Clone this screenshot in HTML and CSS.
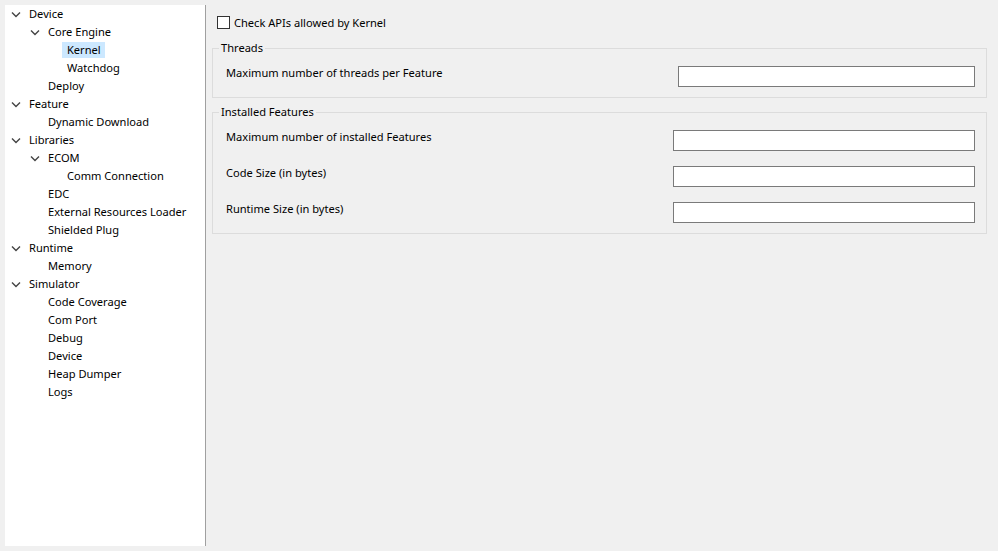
FILE: index.html
```html
<!DOCTYPE html>
<html>
<head>
<meta charset="utf-8">
<link rel="stylesheet" href="styles.css">
</head>
<body>
<div class="window">
  <div class="tree">
    <div class="row l0"><span class="tog open"><svg viewBox="0 0 16 18" width="16" height="18"><path d="M4 7.5 L8 11.5 L12 7.5" /></svg></span><span class="lbl">Device</span></div>
    <div class="row l1"><span class="tog open"><svg viewBox="0 0 16 18" width="16" height="18"><path d="M4 7.5 L8 11.5 L12 7.5" /></svg></span><span class="lbl">Core Engine</span></div>
    <div class="row l2"><span class="tog"></span><span class="lbl sel">Kernel</span></div>
    <div class="row l2"><span class="tog"></span><span class="lbl">Watchdog</span></div>
    <div class="row l1"><span class="tog"></span><span class="lbl">Deploy</span></div>
    <div class="row l0"><span class="tog open"><svg viewBox="0 0 16 18" width="16" height="18"><path d="M4 7.5 L8 11.5 L12 7.5" /></svg></span><span class="lbl">Feature</span></div>
    <div class="row l1"><span class="tog"></span><span class="lbl">Dynamic Download</span></div>
    <div class="row l0"><span class="tog open"><svg viewBox="0 0 16 18" width="16" height="18"><path d="M4 7.5 L8 11.5 L12 7.5" /></svg></span><span class="lbl">Libraries</span></div>
    <div class="row l1"><span class="tog open"><svg viewBox="0 0 16 18" width="16" height="18"><path d="M4 7.5 L8 11.5 L12 7.5" /></svg></span><span class="lbl">ECOM</span></div>
    <div class="row l2"><span class="tog"></span><span class="lbl">Comm Connection</span></div>
    <div class="row l1"><span class="tog"></span><span class="lbl">EDC</span></div>
    <div class="row l1"><span class="tog"></span><span class="lbl">External Resources Loader</span></div>
    <div class="row l1"><span class="tog"></span><span class="lbl">Shielded Plug</span></div>
    <div class="row l0"><span class="tog open"><svg viewBox="0 0 16 18" width="16" height="18"><path d="M4 7.5 L8 11.5 L12 7.5" /></svg></span><span class="lbl">Runtime</span></div>
    <div class="row l1"><span class="tog"></span><span class="lbl">Memory</span></div>
    <div class="row l0"><span class="tog open"><svg viewBox="0 0 16 18" width="16" height="18"><path d="M4 7.5 L8 11.5 L12 7.5" /></svg></span><span class="lbl">Simulator</span></div>
    <div class="row l1"><span class="tog"></span><span class="lbl">Code Coverage</span></div>
    <div class="row l1"><span class="tog"></span><span class="lbl">Com Port</span></div>
    <div class="row l1"><span class="tog"></span><span class="lbl">Debug</span></div>
    <div class="row l1"><span class="tog"></span><span class="lbl">Device</span></div>
    <div class="row l1"><span class="tog"></span><span class="lbl">Heap Dumper</span></div>
    <div class="row l1"><span class="tog"></span><span class="lbl">Logs</span></div>
  </div>
  <div class="page">
    <label class="check"><span class="box"></span><span>Check APIs allowed by Kernel</span></label>
    <fieldset class="group">
      <legend>Threads</legend>
      <div class="field"><span class="flabel">Maximum number of threads per Feature</span><span class="input w297"></span></div>
    </fieldset>
    <fieldset class="group gap">
      <legend>Installed Features</legend>
      <div class="field"><span class="flabel">Maximum number of installed Features</span><span class="input w302"></span></div>
      <div class="field"><span class="flabel">Code Size (in bytes)</span><span class="input w302"></span></div>
      <div class="field"><span class="flabel">Runtime Size (in bytes)</span><span class="input w302"></span></div>
    </fieldset>
  </div>
</div>
</body>
</html>
```
FILE: styles.css
```css
html, body {
  margin: 0;
  padding: 0;
  background: #f0f0f0;
  width: 998px;
  height: 551px;
  overflow: hidden;
}
body {
  font-family: "Noto Sans", "Open Sans", sans-serif;
  font-size: 11.1px;
  color: #000;
}
.window {
  display: flex;
  padding: 5px 0 5px 5px;
  height: 541px;
}
.tree {
  width: 200px;
  background: #fff;
  border-right: 1px solid #a0a0a0;
  flex: none;
}
.row {
  display: flex;
  align-items: center;
  height: 18px;
  padding-left: 3px;
}
.row.l1 { padding-left: 22px; }
.row.l2 { padding-left: 41px; }
.tog {
  width: 16px;
  height: 18px;
  flex: none;
}
.tog svg {
  display: block;
}
.tog path {
  fill: none;
  stroke: #444;
  stroke-width: 1.4;
}
.lbl {
  padding: 0 4px 0 5px;
  line-height: 16px;
  white-space: nowrap;
}
.lbl.sel {
  background: #cce8ff;
}
.page {
  flex: 1;
  padding: 9px 11px 0 6px;
}
.check {
  display: flex;
  align-items: center;
  height: 16px;
  padding-left: 5px;
  gap: 4px;
}
.box {
  width: 11px;
  height: 11px;
  border: 1px solid #333;
  background: #fff;
}
.group {
  margin: 10px 0 0 0;
  border: 1px solid #dcdcdc;
  padding: 10px 11px 10px 13px;
  display: flex;
  flex-direction: column;
  gap: 15px;
}
.group.gap {
  margin-top: 6px;
}
.group legend {
  padding: 0 2px;
  margin-left: -7px;
  line-height: 16px;
}
.field {
  display: flex;
  justify-content: space-between;
  align-items: flex-start;
  height: 21px;
}
.flabel {
  line-height: 14px;
}
.input {
  height: 19px;
  border: 1px solid #7a7a7a;
  background: #fff;
}
.w297 { width: 295px; }
.w302 { width: 300px; }
```
